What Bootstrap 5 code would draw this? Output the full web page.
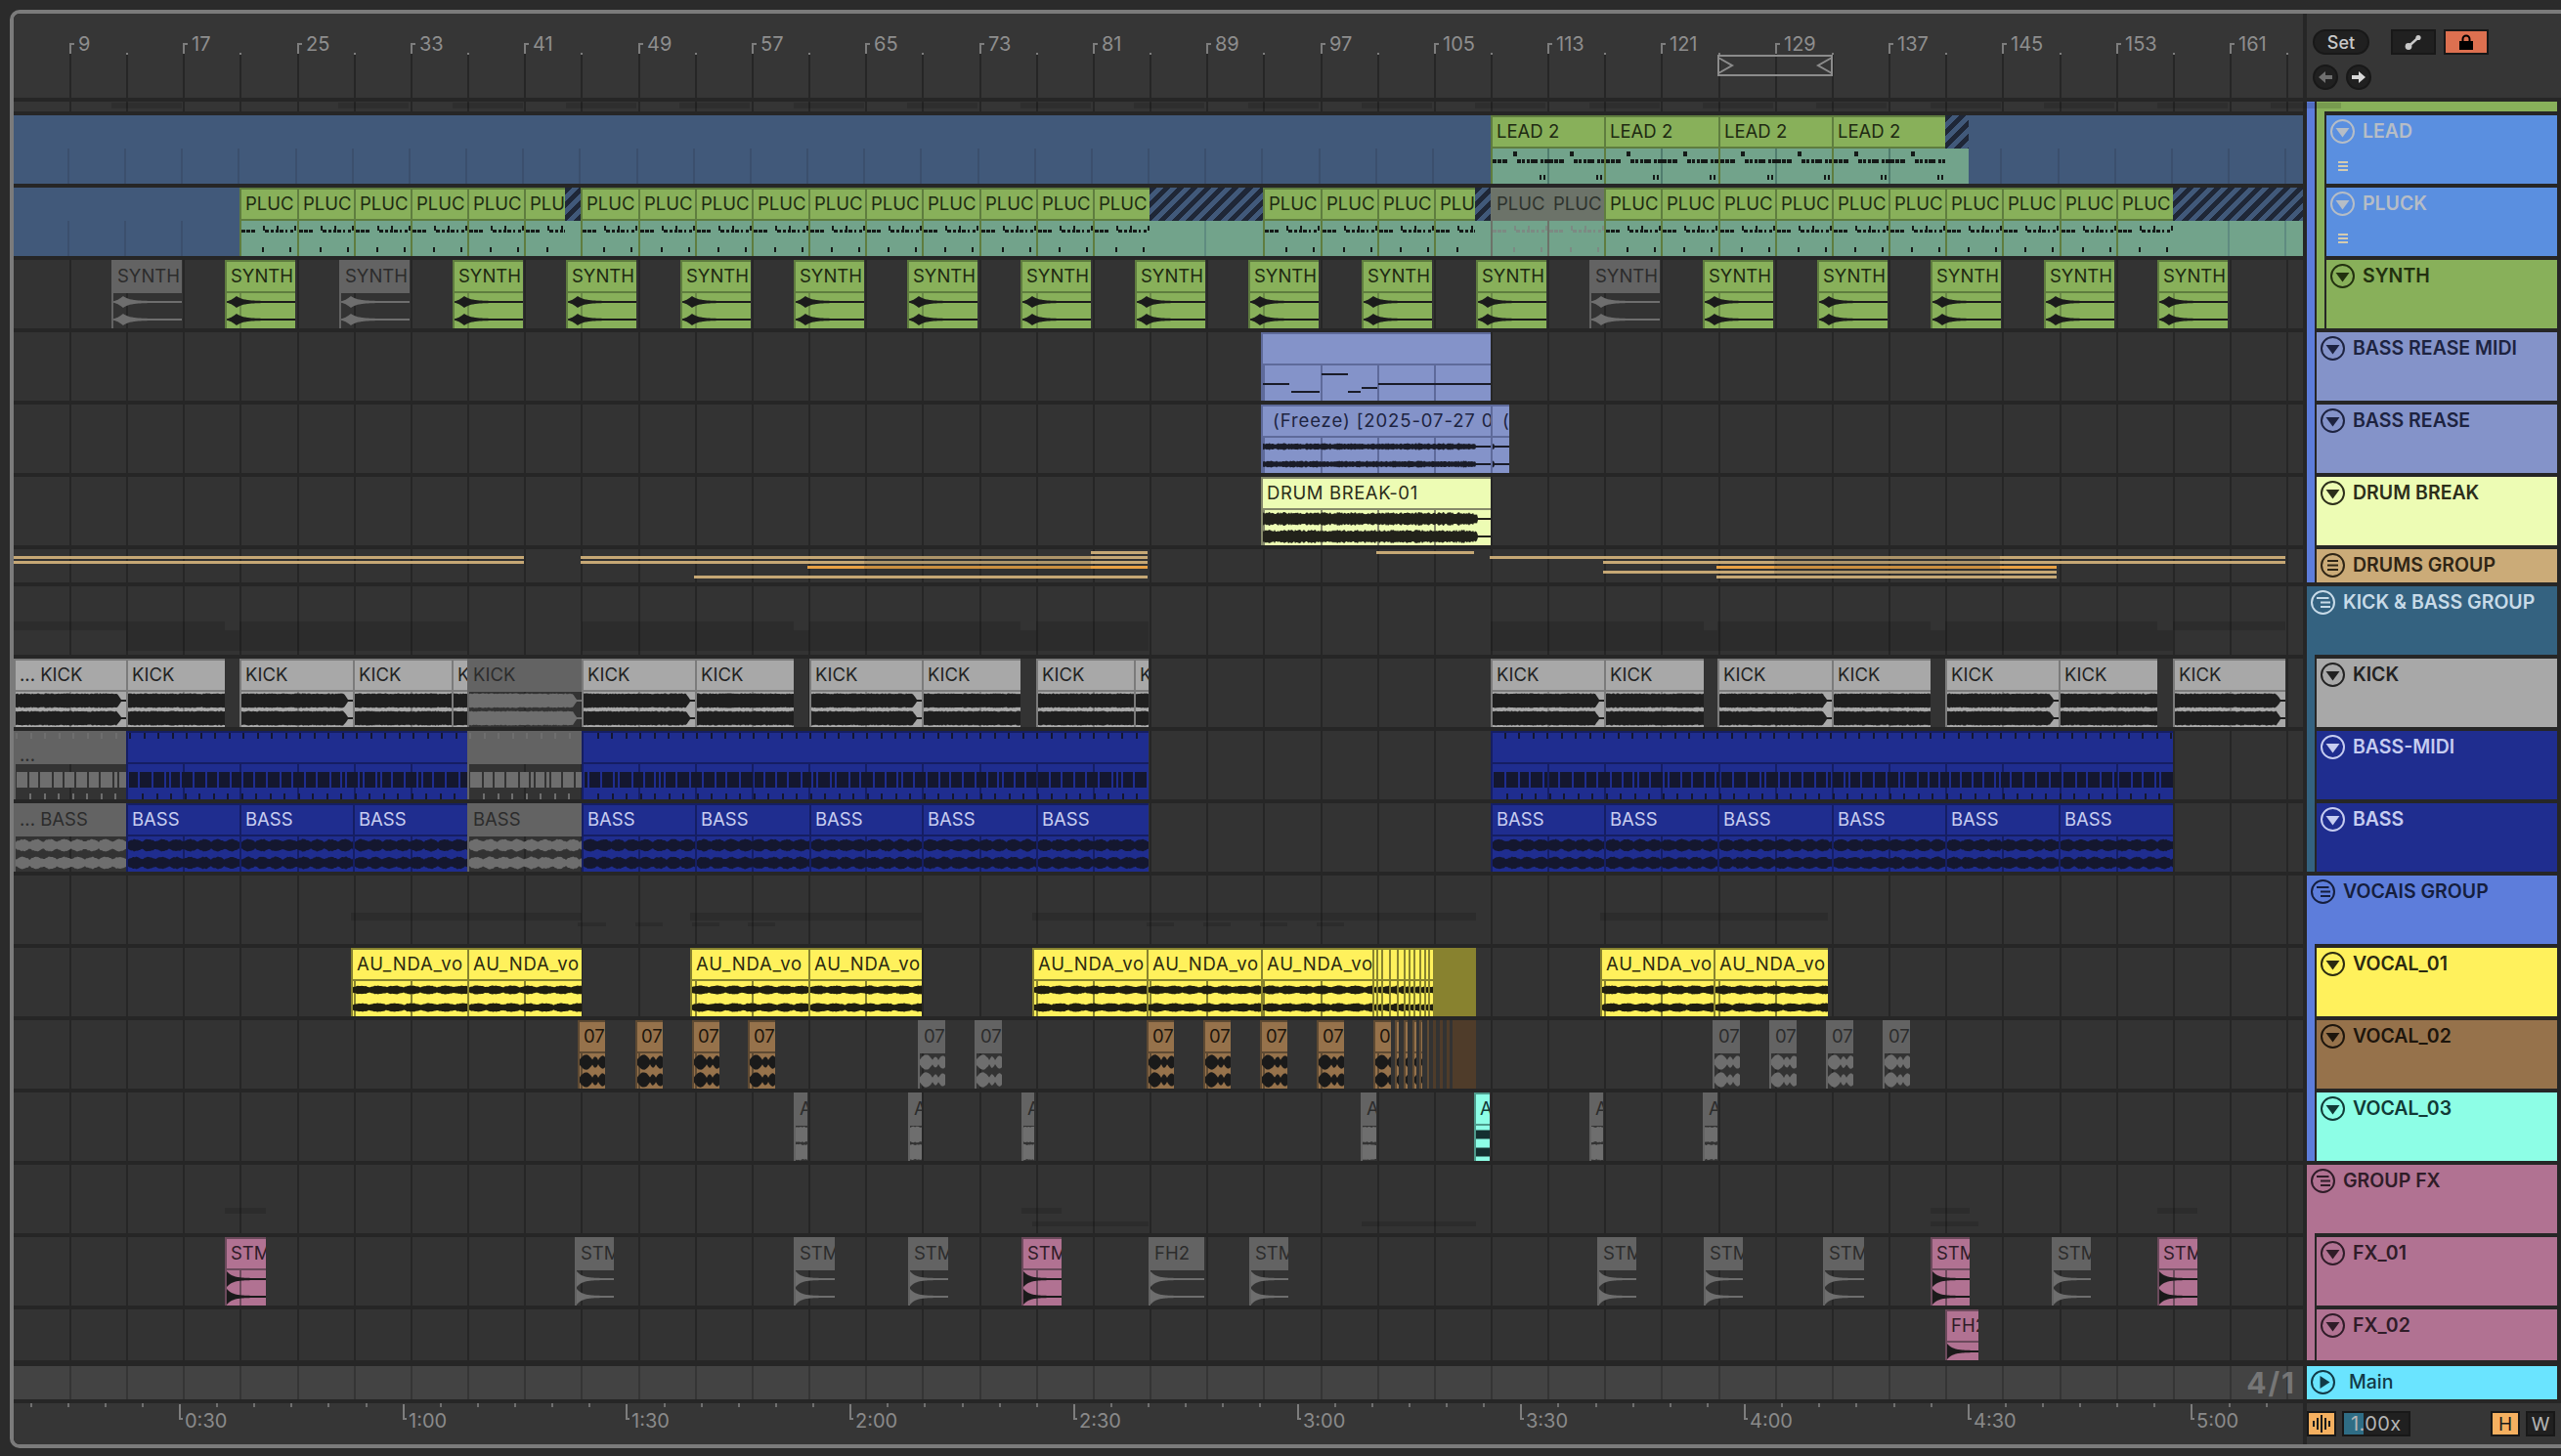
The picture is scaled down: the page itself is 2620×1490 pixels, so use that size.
<!DOCTYPE html>
<html lang="en">
<head>
<meta charset="utf-8">
<title>Arrangement</title>
<link href="https://cdn.jsdelivr.net/npm/bootstrap@5.3.0/dist/css/bootstrap.min.css" rel="stylesheet">
<style>
html,body{width:2620px;height:1490px;overflow:hidden;background:#2b2b2b;margin:0}
body{font-family:Inter,"Liberation Sans",sans-serif;font-size:18px}
.arr-frame{margin:10px 0 0 10px;width:2610px;height:1472px;border:4px solid #7b7b7b;border-right:0;border-radius:10px 0 0 10px;overflow:hidden;background:#262626}
.arr-main{width:2342px;flex:none}
.arr-heads{width:260px;flex:none}
.ruler-top{height:86px;background:#363636;flex:none}
.ruler-bot{height:42px;background:#363636;flex:none}
.lane{height:70px;background:#333;flex:none}
.lane-thin{height:10px;background:#353535}
.lane-drums{height:34px}
.lane-fx2{height:52px}
.lane-master{height:34px;background:#434343;margin-top:2px}
.gridlayer{position:absolute;left:0;top:41px;width:100%;height:1343px;z-index:1;pointer-events:none}
.gridlayer i,.mline{position:absolute;top:0;bottom:0;width:2px;background:#262626}
.mline{background:#353535;z-index:2}
.rlabel{position:absolute;top:21px;color:#8e8e8e;font-size:20px;line-height:20px;z-index:2}
.rtick{position:absolute;top:30px;width:5px;height:11px;border-left:2px solid #7d7d7d;border-top:2px solid #7d7d7d;z-index:2}
.rminor{position:absolute;top:40px;width:2px;height:2px;background:#7d7d7d;z-index:2}
.rloop{position:absolute;left:1743px;top:42px;z-index:3}
.tlabel{position:absolute;top:8px;color:#8a8a8a;font-size:20px;line-height:20px}
.ttick{position:absolute;top:0;width:2px;height:4px;background:#6f6f6f}
.tmajor{position:absolute;top:1px;width:4px;height:16px;border-left:2px solid #7d7d7d;border-bottom:2px solid #7d7d7d}
.sigtext{position:absolute;right:7px;top:0;font-size:30px;line-height:34px;font-weight:700;letter-spacing:2px;color:#767676;z-index:3}
.tclip{position:absolute;top:0;bottom:0;overflow:hidden;border-left:2px solid var(--edge);z-index:2;display:flex;flex-direction:column}
.tclip-head{position:relative;flex:none;height:34px;padding-left:4px;background:var(--bg);border-top:2px solid var(--edge);border-bottom:2px solid var(--edge);color:var(--ink);font-size:18.5px;line-height:29px;white-space:nowrap;overflow:hidden}
.tclip-wide{padding-left:10px}
.tclip-body{position:relative;flex:1;background:var(--body)}
.tclip-body>i{position:absolute;top:0;bottom:0;width:2px;background:var(--gl)}
.tclip svg{position:absolute;left:0;top:0;fill:var(--wave)}
.tone-green{--bg:#88b05a;--edge:#5f7d3f;--ink:#1e2a12;--body:#88b05a;--wave:#1b1b1b;--gl:rgba(0,0,0,.2)}
.tone-pluck{--bg:#88b05a;--edge:#5f7d3f;--ink:#1e2a12;--body:#72a38b;--wave:#151a18;--gl:#507c6e}
.tone-plumu{--bg:#6c7369;--edge:#6c7369;--ink:#2e322d;--body:#72a38b;--wave:#7c8a83;--gl:#5f8b92}
.tone-hatch{--bg:#41597a;--edge:transparent;--ink:#000;--body:#72a38b;--wave:#000;--gl:#5f8b80;border-left:0}
.tone-hatch .tclip-head{border:0;background:repeating-linear-gradient(135deg,#1f2737 0 5px,#41597a 5px 10px)}
.tone-blue{--bg:#41597a;--edge:#41597a;--ink:#000;--body:#41597a;--wave:#000;--gl:#3b4f6d;border-left:0}
.tone-blue .tclip-head{border:0}
.tone-dim{--bg:#636363;--edge:#636363;--ink:#2c2c2c;--body:transparent;--wave:#6e6e6e;--gl:transparent}
.tone-peri{--bg:#8493c9;--edge:#5e6a9a;--ink:#1d2340;--body:#8493c9;--wave:#1a1c28;--gl:#5e6a9a}
.tone-peri .tclip-head{letter-spacing:.9px}
.tone-drum{--bg:#edfcb4;--edge:#85896a;--ink:#2b2d1a;--body:#edfcb4;--wave:#22221a;--gl:#85896a}
.tone-drum .tclip-head{letter-spacing:.6px}
.tone-kick{--bg:#a8a8a8;--edge:#7b7b7b;--ink:#222;--body:#a8a8a8;--wave:#1f1f1f;--gl:rgba(0,0,0,.22)}
.tone-navy{--bg:#1f2d8f;--edge:#151e63;--ink:#c8cdf0;--body:#1f2d8f;--wave:#14172f;--gl:#151e63}
.tone-yellow{--bg:#fff15c;--edge:#87822f;--ink:#2b2a10;--body:#fff15c;--wave:#1f1e10;--gl:#87822f}
.tone-yellow .tclip-head{letter-spacing:.8px}
.tone-olive{--bg:#88822f;--edge:#88822f;--ink:#000;--body:#88822f;--wave:#000;--gl:transparent}
.tone-brown{--bg:#96724b;--edge:#5e4a33;--ink:#1d150c;--body:#96724b;--wave:#1a1a1a;--gl:#5e4a33}
.tone-umber{--bg:#4f3c2a;--edge:#4f3c2a;--ink:#000;--body:#4f3c2a;--wave:#000;--gl:transparent}
.tone-cyan{--bg:#8dfee6;--edge:#4e9a8b;--ink:#123a36;--body:#8dfee6;--wave:#143030;--gl:#4e9a8b}
.tone-pink{--bg:#b17292;--edge:#6c4a5c;--ink:#2f1c28;--body:#b17292;--wave:#1a1a1a;--gl:#6c4a5c}
.tanline{position:absolute;height:3px;background:#d2b27b;opacity:.93;z-index:2}
.tanline-hot{background:#f8aa46}
.dimband{position:absolute;top:0;bottom:0;background:rgba(45,45,45,.16);z-index:2}
.gstrip{position:absolute;background:rgba(0,0,0,.12);z-index:2}
/* track headers */
.hd-top{height:86px;background:#363636;padding:16px 0 0 6px;flex:none}
.tool-row2{margin-top:10px}
.hd-bot{height:42px;background:#363636;padding:8px 6px 0 0;flex:none;margin-top:0}
.tgroup{margin-right:4px}
.tgroup-in{background:#262626;margin-left:8px;padding-left:2px}
.tgroup-pt{padding-top:4px}
.tr-row{height:70px;flex:none;padding:4px 0 0 4px;font-size:19.5px;line-height:25px;font-weight:600;white-space:nowrap}
.tr-short{height:34px}
.tr-fx2{height:52px}
.tr-row svg.ticon{width:25px;height:25px;flex:none;margin-right:8px;color:inherit}
.tr-tools{margin:18px 0 0 8px;display:block}
.tr-master{height:34px;margin:2px 4px 0 0;font-weight:500;padding:4px 0 0 4px;font-size:19.5px;line-height:25px;flex:none}
.tr-master svg.ticon{width:25px;height:25px;margin-right:14px;flex:none}
.bg-lead{background:#5a8fe0;color:#b6bdc6}
.bg-synth{background:#88b05a;color:#22300f}
.bg-peri{background:#8493c9;color:#1d2340}
.bg-drumb{background:#edfcb4;color:#2c2e1a}
.bg-drumg{background:#cbab78;color:#2f2515}
.bg-kb{background:#346280;color:#c8dbe8}
.bg-kick{background:#a8a8a8;color:#222}
.bg-navy{background:#1f2d8f;color:#c6ccf0}
.bg-voc{background:#5d7ddb;color:#151e3e}
.bg-v1{background:#fff15c;color:#2b2a10}
.bg-v2{background:#96724b;color:#1d150c}
.bg-v3{background:#8dfee6;color:#113a36}
.bg-fx{background:#b17292;color:#2f1c28}
.bg-main{background:#6ae4ff;color:#123a47}
.synth-top{margin-top:10px}
.btn.tool-set{width:58px;height:26px;padding:0;background:#202020;border:2px solid #181818;color:#c8c8c8;font-size:18px;line-height:21px;font-weight:500;border-radius:13px}
.btn.tool-sq{width:46px;height:26px;padding:0;border-radius:0;border:2px solid #181818;background:#202020;display:flex;align-items:center;justify-content:center}
.btn.tool-lock{background:#dd7050;margin-left:8px}
.btn.tool-exp{margin-left:22px}
.btn.tool-nav{width:26px;height:26px;padding:0;border-radius:50%;background:#202020;border:2px solid #181818;display:flex;align-items:center;justify-content:center}
.btn.tool-cpu{width:30px;height:26px;padding:0;border-radius:0;background:#f5b060;border:2px solid #181818;display:flex;align-items:center;justify-content:center}
.btn.tool-rate{width:70px;height:26px;padding:0 0 0 7px;margin-left:6px;border-radius:0;border:2px solid #181818;background:linear-gradient(90deg,#2f6d85 20px,#202020 20px);color:#b5b5b5;font-size:20px;line-height:21px;text-align:left;letter-spacing:.4px}
.btn.tool-key{width:30px;height:26px;padding:0;border-radius:0;border:2px solid #181818;background:#202020;color:#b5b5b5;font-size:19px;line-height:21px}
.btn.tool-h{background:#f5b060;color:#1c1c1c;margin-left:auto;margin-right:6px}
</style>
</head>
<body>
<svg width="0" height="0" class="position-absolute">
<defs>
<symbol id="ic-down" viewBox="0 0 25 25"><circle cx="12.5" cy="12.5" r="11.5" fill="none" stroke="currentColor" stroke-width="2"/><path d="M5.5 9h14l-7 9.5z" fill="currentColor"/></symbol>
<symbol id="ic-fold" viewBox="0 0 25 25"><circle cx="12.5" cy="12.5" r="11.5" fill="none" stroke="currentColor" stroke-width="2"/><path d="M6 8h12.5M10 12.5h10M10 17h10" fill="none" stroke="currentColor" stroke-width="2"/></symbol>
<symbol id="ic-eq" viewBox="0 0 25 25"><circle cx="12.5" cy="12.5" r="11.5" fill="none" stroke="currentColor" stroke-width="2"/><path d="M7 8h11M7 12.5h11M7 17h11" fill="none" stroke="currentColor" stroke-width="2"/></symbol>
<symbol id="ic-play" viewBox="0 0 25 25"><circle cx="12.5" cy="12.5" r="11.5" fill="none" stroke="currentColor" stroke-width="2"/><path d="M9.5 6l10 6.5-10 6.5z" fill="currentColor"/></symbol>
<symbol id="ic-lines" viewBox="0 0 10 10"><path d="M0 1h10M0 5h10M0 9h10" fill="none" stroke="currentColor" stroke-width="2"/></symbol>
</defs>
</svg>
<div class="arr-frame">
<div class="d-flex gap-1 h-100">
<div class="arr-main d-flex flex-column gap-1 position-relative">
  <div class="gridlayer" id="gridlayer"></div>
  <div class="ruler-top position-relative" id="rtop">
    <svg class="rloop" width="118" height="22" viewBox="0 0 118 22"><path d="M1 1h116v20H1zM1 3l14 8L1 19M117 3l-14 8 14 8" fill="none" stroke="#8c8c8c" stroke-width="2"/></svg>
  </div>
  <div class="lane lane-thin position-relative" id="l-top"></div>
  <div class="lane position-relative" id="l-lead"></div>
  <div class="lane position-relative" id="l-pluck"></div>
  <div class="lane position-relative" id="l-synth"></div>
  <div class="lane position-relative" id="l-brm"></div>
  <div class="lane position-relative" id="l-br"></div>
  <div class="lane position-relative" id="l-db"></div>
  <div class="lane lane-drums position-relative" id="l-dg"></div>
  <div class="lane position-relative" id="l-kbg"></div>
  <div class="lane position-relative" id="l-kick"></div>
  <div class="lane position-relative" id="l-bm"></div>
  <div class="lane position-relative" id="l-bass"></div>
  <div class="lane position-relative" id="l-vg"></div>
  <div class="lane position-relative" id="l-v1"></div>
  <div class="lane position-relative" id="l-v2"></div>
  <div class="lane position-relative" id="l-v3"></div>
  <div class="lane position-relative" id="l-fg"></div>
  <div class="lane position-relative" id="l-f1"></div>
  <div class="lane lane-fx2 position-relative" id="l-f2"></div>
  <div class="lane lane-master position-relative" id="l-main"><span class="sigtext">4/1</span></div>
  <div class="ruler-bot position-relative" id="rbot"></div>
</div>
<div class="arr-heads d-flex flex-column gap-1">
  <div class="hd-top">
    <div class="d-flex">
      <button class="btn tool-set">Set</button>
      <button class="btn tool-sq tool-exp" aria-label="Expand"><svg width="18" height="16" viewBox="0 0 18 16"><path d="M4 12.5L14 3.5" stroke="#c8c8c8" stroke-width="2.4"/><circle cx="4" cy="12.5" r="3.4" fill="#c8c8c8"/><circle cx="14" cy="3.5" r="2.6" fill="#c8c8c8"/></svg></button>
      <button class="btn tool-sq tool-lock" aria-label="Lock"><svg width="16" height="16" viewBox="0 0 16 16"><path d="M4.5 7V5a3.5 3.5 0 0 1 7 0v2" fill="none" stroke="#000" stroke-width="2"/><rect x="1" y="7" width="14" height="9" fill="#000"/></svg></button>
    </div>
    <div class="d-flex gap-2 tool-row2">
      <button class="btn tool-nav" aria-label="Back"><svg width="16" height="14" viewBox="0 0 16 14"><path d="M8 1L1 7l7 6v-4h7V5H8z" fill="#6f6f6f"/></svg></button>
      <button class="btn tool-nav" aria-label="Forward"><svg width="16" height="14" viewBox="0 0 16 14"><path d="M8 1l7 6-7 6V9H1V5h7z" fill="#d8d8d8"/></svg></button>
    </div>
  </div>
  <div class="tgroup bg-voc">
    <div class="tgroup-in d-flex flex-column gap-1">
      <div class="bg-synth">
        <div class="tgroup-in synth-top tgroup-pt d-flex flex-column gap-1">
          <div class="tr-row bg-lead"><div class="d-flex align-items-center"><svg class="ticon"><use href="#ic-down"/></svg>LEAD</div><svg class="tr-tools" width="10" height="10" color="#d4cbb0"><use href="#ic-lines"/></svg></div>
          <div class="tr-row bg-lead"><div class="d-flex align-items-center"><svg class="ticon"><use href="#ic-down"/></svg>PLUCK</div><svg class="tr-tools" width="10" height="10" color="#d4cbb0"><use href="#ic-lines"/></svg></div>
          <div class="tr-row bg-synth"><div class="d-flex align-items-center"><svg class="ticon"><use href="#ic-down"/></svg>SYNTH</div></div>
        </div>
      </div>
      <div class="tr-row bg-peri"><div class="d-flex align-items-center"><svg class="ticon"><use href="#ic-down"/></svg>BASS REASE MIDI</div></div>
      <div class="tr-row bg-peri"><div class="d-flex align-items-center"><svg class="ticon"><use href="#ic-down"/></svg>BASS REASE</div></div>
      <div class="tr-row bg-drumb"><div class="d-flex align-items-center"><svg class="ticon"><use href="#ic-down"/></svg>DRUM BREAK</div></div>
      <div class="tr-row tr-short bg-drumg"><div class="d-flex align-items-center"><svg class="ticon"><use href="#ic-eq"/></svg>DRUMS GROUP</div></div>
    </div>
  </div>
  <div class="tgroup bg-kb">
    <div class="tr-row bg-kb"><div class="d-flex align-items-center"><svg class="ticon"><use href="#ic-fold"/></svg>KICK &amp; BASS GROUP</div></div>
    <div class="tgroup-in tgroup-pt d-flex flex-column gap-1">
      <div class="tr-row bg-kick"><div class="d-flex align-items-center"><svg class="ticon"><use href="#ic-down"/></svg>KICK</div></div>
      <div class="tr-row bg-navy"><div class="d-flex align-items-center"><svg class="ticon"><use href="#ic-down"/></svg>BASS-MIDI</div></div>
      <div class="tr-row bg-navy"><div class="d-flex align-items-center"><svg class="ticon"><use href="#ic-down"/></svg>BASS</div></div>
    </div>
  </div>
  <div class="tgroup bg-voc">
    <div class="tr-row bg-voc"><div class="d-flex align-items-center"><svg class="ticon"><use href="#ic-fold"/></svg>VOCAIS GROUP</div></div>
    <div class="tgroup-in tgroup-pt d-flex flex-column gap-1">
      <div class="tr-row bg-v1"><div class="d-flex align-items-center"><svg class="ticon"><use href="#ic-down"/></svg>VOCAL_01</div></div>
      <div class="tr-row bg-v2"><div class="d-flex align-items-center"><svg class="ticon"><use href="#ic-down"/></svg>VOCAL_02</div></div>
      <div class="tr-row bg-v3"><div class="d-flex align-items-center"><svg class="ticon"><use href="#ic-down"/></svg>VOCAL_03</div></div>
    </div>
  </div>
  <div class="tgroup bg-fx">
    <div class="tr-row bg-fx"><div class="d-flex align-items-center"><svg class="ticon"><use href="#ic-fold"/></svg>GROUP FX</div></div>
    <div class="tgroup-in tgroup-pt d-flex flex-column gap-1">
      <div class="tr-row bg-fx"><div class="d-flex align-items-center"><svg class="ticon"><use href="#ic-down"/></svg>FX_01</div></div>
      <div class="tr-row tr-fx2 bg-fx"><div class="d-flex align-items-center"><svg class="ticon"><use href="#ic-down"/></svg>FX_02</div></div>
    </div>
  </div>
  <div class="tr-master bg-main d-flex align-items-start"><svg class="ticon"><use href="#ic-play"/></svg>Main</div>
  <div class="hd-bot d-flex">
    <button class="btn tool-cpu" aria-label="Audio"><svg width="20" height="18" viewBox="0 0 20 18"><path d="M2 6v6M6 3v12M10 0v18M14 3v12M18 6v6" stroke="#1c1c1c" stroke-width="2" fill="none"/></svg></button>
    <button class="btn tool-rate">1.00x</button>
    <button class="btn tool-key tool-h">H</button>
    <button class="btn tool-key">W</button>
  </div>
</div>
</div>
</div>
<script src="https://cdn.jsdelivr.net/npm/bootstrap@5.3.0/dist/js/bootstrap.bundle.min.js"></script>
<script>
(function(){
const gx=k=>Math.round(71+58.16*k);
const $=id=>document.getElementById(id);
function el(tag,cls,parent){const e=document.createElement(tag);if(cls)e.className=cls;if(parent)parent.appendChild(e);return e;}
function rng(seed){let s=seed*9301+49297;return ()=>{s=(s*9301+49297)%233280;return s/233280;};}

/* grid */
const glayer=$('gridlayer'),mainLane=$('l-main');
for(let k=0;k<40;k++){const x=gx(k)-14;
  el('i','',glayer).style.left=x+'px';
  el('i','mline',mainLane).style.left=x+'px';}

/* top ruler */
const rt=$('rtop');
for(let i=0;i<20;i++){const x=gx(i*2)-14;
  el('span','rtick',rt).style.left=x+'px';
  const l=el('span','rlabel',rt);l.style.left=(x+9)+'px';l.textContent=String(9+i*8);
  el('span','rminor',rt).style.left=(gx(i*2+1)-14)+'px';}

/* bottom ruler */
const rb=$('rbot'),T=['0:30','1:00','1:30','2:00','2:30','3:00','3:30','4:00','4:30','5:00'];
for(let k=-5;k<60;k++){const x=Math.round(183+38.12*k)-14;
  if(x<0||x>2330)continue;
  if(k%6===0&&k>=0&&k/6<T.length){
    el('span','tmajor',rb).style.left=x+'px';
    const l=el('span','tlabel',rb);l.style.left=(x+6)+'px';l.textContent=T[k/6];
  }else el('span','ttick',rb).style.left=x+'px';}

/* waveforms */
function rectD(list){return list.map(r=>'M'+r[0]+' '+r[1]+'h'+r[2]+'v'+r[3]+'h-'+r[2]+'z').join('');}
function lump(x){
  x=x%28;
  if(x<13)return 2.5+5*Math.sin(Math.PI*x/13);
  if(x<19)return 2+3.5*Math.sin(Math.PI*(x-13)/6);
  return 2+4.5*Math.sin(Math.PI*(x-19)/9);
}
function env(type,x,w,r){
  switch(type){
    case 'synth':{const p=10;return x<p?0.8+5.2*Math.pow(x/p,1.5):1+5*Math.exp(-(x-p)/7);}
    case 'stm':return 1+7*Math.exp(-x/6);
    case 'kick':{const n=6.6+r()*1;return (x>w-10)?(x>w-5?1:Math.max(1,n*(w-5-x)/5+1)):n;}
    case 'kickc':return 6.6+r()*1;
    case 'bass':return 3+2.6*Math.abs(Math.sin(x/4.5))+r()*1;
    case 'vocal':return 2.4+1.6*Math.abs(Math.sin(x/5.5))+r()*.7;
    case 'lump':return lump(x)+r()*.4;
    case 'drum':return x>w-14?1:Math.max(2,4.8+r()*2.2)*(x>w-18?.8:1);
    case 'freeze':return x>w-16?1:2.2+r()*1.3;
    case 'block':return 4.5;
    case 'blockd':return 7+r()*1.4;
  }return 1;
}
function wavePath(type,w,seed){
  const r=rng(seed);let d='';
  [9,27].forEach(c=>{
    const top=[],bot=[];
    for(let x=0;x<=w;x++){const h=env(type,x,w,r);top.push(x+' '+(c-h).toFixed(1));bot.unshift(x+' '+(c+h).toFixed(1));}
    d+='M'+top.join('L')+'L'+bot.join('L')+'z';
  });
  return d;
}
const PL=[[0,4],[5,4],[10,4],[24,4],[30,3],[35,3],[39,4],[45,2],[50,3]];
const PT=[22,36,54],PB=[21,49];
function pluckD(w){const L=[];
  for(let o=0;o<w;o+=58){
    PL.forEach(n=>L.push([o+n[0],9,n[1],3]));
    PT.forEach(t=>L.push([o+t,5,2,5]));
    PB.forEach(t=>L.push([o+t,27,2,5]));}
  return rectD(L);}
const LL=[[0,4],[5,4],[10,5],[25,4],[30,3],[35,3],[39,7],[49,3],[53,5]];
function leadD(w){const L=[];
  for(let o=0;o<w;o+=58){
    LL.forEach(n=>L.push([o+n[0],11,n[1],4]));
    L.push([o+21,3,4,5]);
    L.push([o+48,27,2,5],[o+52,27,2,5]);}
  return rectD(L);}
function bassBarsD(w,seed){const r=rng(seed),L=[];let x=1;
  while(x<w){const bw=r()<.18?3:9+Math.floor(r()*4);L.push([x,8,bw,16]);x+=bw+2;}
  for(let t=14;t<w;t+=14.5)L.push([Math.round(t),30,2,6]);
  return rectD(L);}
function svgOf(w,h,d){return '<svg width="'+w+'" height="'+h+'" viewBox="0 0 '+w+' '+h+'"><path d="'+d+'"/></svg>';}

const lanes=id=>$('l-'+id);
function clip(lane,x0,x1,tone,name,wave,wide){
  const w=x1-x0,c=el('div','tclip '+tone,lanes(lane));
  c.style.left=(x0-14)+'px';c.style.width=w+'px';
  const head=el('div','tclip-head'+(wide?' tclip-wide':''),c);
  if(name)head.appendChild(document.createTextNode(name));
  const body=el('div','tclip-body',c),iw=w-2;
  for(let k=0;k<40;k++){const g=gx(k);
    if(g>x0+1&&g<x1-1)el('i','',body).style.left=(g-x0-2)+'px';}
  if(wave==='pluck')body.insertAdjacentHTML('beforeend',svgOf(iw,36,pluckD(iw)));
  else if(wave==='lead')body.insertAdjacentHTML('beforeend',svgOf(iw,36,leadD(iw)));
  else if(wave==='bm'){
    body.insertAdjacentHTML('beforeend',svgOf(iw,36,bassBarsD(iw,x0)));
    const L=[];for(let t=((14-x0)%14.5+14.5)%14.5;t<iw;t+=14.5)L.push([Math.round(t),0,2,6]);
    head.insertAdjacentHTML('beforeend',svgOf(iw,30,rectD(L)));
  }
  else if(wave)body.insertAdjacentHTML('beforeend',svgOf(iw,36,wavePath(wave,iw,x0+1)));
  return c;
}

/* LEAD */
clip('lead',14,1525,'tone-blue');clip('lead',2014,2356,'tone-blue');
[25,27,29,31].forEach(k=>clip('lead',gx(k),gx(k+2),'tone-pluck','LEAD 2','lead'));
clip('lead',gx(33),2014,'tone-hatch');

/* PLUCK */
clip('pluck',14,gx(3),'tone-blue');
const pc=(a,b,n)=>clip('pluck',a,b,'tone-pluck',n||'PLUC','pluck');
[3,4,5,6,7].forEach(k=>pc(gx(k),gx(k+1)));pc(gx(8),578,'PLU');clip('pluck',578,gx(9),'tone-hatch');
for(let k=9;k<19;k++)pc(gx(k),gx(k+1));
clip('pluck',gx(19),gx(21),'tone-hatch');
[21,22,23].forEach(k=>pc(gx(k),gx(k+1)));pc(gx(24),1509,'PLU');clip('pluck',1509,gx(25),'tone-hatch');
clip('pluck',gx(25),gx(26),'tone-plumu','PLUC','pluck');clip('pluck',gx(26),gx(27),'tone-plumu','PLUC','pluck');
for(let k=27;k<37;k++)pc(gx(k),gx(k+1));
clip('pluck',gx(37),2356,'tone-hatch');

/* SYNTH */
const dimS=[0,2,13];
for(let k=0;k<19;k++){const x=Math.round(114+116.3*k),d=dimS.includes(k);
  clip('synth',x,x+72,d?'tone-dim':'tone-green','SYNTH','synth');
  const s=el('div','gstrip',lanes('top'));s.style.left=(x+116-14-(k?0:116))+'px';s.style.width='72px';s.style.top='1px';s.style.height='6px';}

/* BASS REASE */
const bm=clip('brm',1290,1525,'tone-peri','');
bm.querySelector('.tclip-body').insertAdjacentHTML('beforeend',svgOf(233,36,rectD([[0,18,27,2],[29,26,29,2],[60,8,27,2],[87,26,13,2],[101,22,16,2],[118,18,115,2]])));
clip('br',1290,1525,'tone-peri','(Freeze) [2025-07-27 0','freeze',true);
clip('br',1525,1544,'tone-peri','(','freeze',true);
clip('db',1290,1525,'tone-drum','DRUM BREAK-01','drum');

/* DRUM GROUP */
[[14,536,8],[594,1174,8],[14,536,13],[594,1174,13],[826,1174,18,1],[710,1174,28],[1116,1174,3],
 [1408,1508,3],[1524,2338,8],[1640,2338,13],[1756,2104,18,1],[1640,2104,23],[1756,2104,28]].forEach(a=>{
  const t=el('div','tanline'+(a[3]?' tanline-hot':''),lanes('dg'));
  t.style.left=(a[0]-14)+'px';t.style.width=(a[1]-a[0])+'px';t.style.top=(a[2]-1)+'px';});
[[884,1116],[1815,2046]].forEach(a=>{const t=el('div','dimband',lanes('dg'));t.style.left=(a[0]-14)+'px';t.style.width=(a[1]-a[0])+'px';t.style.top='7px';t.style.bottom='7px';});

/* KICK */
const kick=[[14,129,'... KICK'],[129,230],[245,361],[361,462],[462,478,'K'],[478,595,'KICK',1],[595,711],[711,812],[828,943],[943,1044],[1060,1160],[1160,1175,'K'],
 [1525,1641],[1641,1743],[1757,1874],[1874,1975],[1990,2106],[2106,2207],[2223,2338]];
kick.forEach(c=>clip('kick',c[0],c[1],c[3]?'tone-dim':'tone-kick',c[2]||'KICK',(c[1]-c[0]>110)?'kick':'kickc'));

/* BASS MIDI */
[[14,129,1,'...'],[129,478],[478,595,1],[595,1175],[1525,2223]].forEach(c=>{
  const e=clip('bm',c[0],c[1],c[2]?'tone-dim':'tone-navy',c[3]||'','bm');
  if(c[3])e.querySelector('.tclip-head').classList.add('pt-2');});

/* BASS */
[[14,129,1,'... BASS'],[129,245],[245,361],[361,478],[478,595,1],[595,711],[711,828],[828,943],[943,1060],[1060,1175],
 [1525,1641],[1641,1757],[1757,1874],[1874,1990],[1990,2106],[2106,2223]].forEach(c=>clip('bass',c[0],c[1],c[2]?'tone-dim':'tone-navy',c[3]||'BASS','bass'));

/* group summaries */
function strips(lane,list,top,h){list.forEach(a=>{const s=el('div','gstrip',lanes(lane));s.style.left=(a[0]-14)+'px';s.style.width=(a[1]-a[0])+'px';s.style.top=top+'px';s.style.height=h+'px';});}
strips('kbg',[[14,230],[245,478],[595,812],[828,1044],[1060,1175],[1525,1743],[1757,1975],[1990,2207],[2223,2338]],36,9);
strips('kbg',[[129,478],[595,1175],[1525,2223]],45,21);
strips('vg',[[359,595],[706,943],[1056,1510],[1637,1870]],38,8);
strips('vg',[[591,620],[650,678],[708,736],[765,793],[1173,1201],[1231,1259],[1289,1317],[1347,1375]],48,4);
strips('fg',[[230,272],[1045,1086],[1975,2015],[2207,2248]],44,6);
strips('fg',[[1056,1175],[1393,1510],[1975,2024]],58,5);

/* VOCAL 1 */
[[359,478],[478,595],[706,827],[827,943],[1056,1173],[1173,1290],[1290,1404],[1637,1753],[1753,1870]].forEach(c=>clip('v1',c[0],c[1],'tone-yellow','AU_NDA_vo','vocal'));
[1404,1408,1413,1421,1429,1436,1441,1446,1452,1457,1461].forEach((x,i,a)=>clip('v1',x,a[i+1]||1466,'tone-yellow','','vocal'));
clip('v1',1466,1510,'tone-olive');

/* VOCAL 2 */
[[591,0],[650,0],[708,0],[765,0],[939,1],[997,1],[1173,0],[1231,0],[1289,0],[1347,0],[1752,1],[1810,1],[1868,1],[1926,1]].forEach(c=>clip('v2',c[0],c[0]+28,c[1]?'tone-dim':'tone-brown','07','lump'));
clip('v2',1405,1423,'tone-brown','0','lump');
[[1427,1431],[1436,1440],[1445,1449],[1452,1455],[1460,1462]].forEach(c=>clip('v2',c[0],c[1],'tone-brown','','lump'));
[[1466,1469],[1473,1476],[1480,1483],[1486,1489]].forEach(c=>clip('v2',c[0],c[1],'tone-umber'));
clip('v2',1488,1510,'tone-umber');

/* VOCAL 3 */
[[812,826],[929,943],[1045,1058],[1392,1408],[1626,1640],[1742,1757]].forEach(c=>clip('v3',c[0],c[1],'tone-dim','A','blockd'));
clip('v3',1508,1524,'tone-cyan','A','block');

/* FX */
[[230,272,0],[588,628,1],[812,854,1],[929,970,1],[1045,1086,0],[1175,1232,1,'FH2'],[1278,1318,1],[1634,1674,1],[1743,1783,1],[1865,1907,1],[1975,2015,0],[2099,2139,1],[2207,2248,0]].forEach(c=>clip('f1',c[0],c[1],c[2]?'tone-dim':'tone-pink',c[3]||'STM','stm'));
clip('f2',1990,2024,'tone-pink','FH2','stm');
})();
</script>
</body>
</html>
